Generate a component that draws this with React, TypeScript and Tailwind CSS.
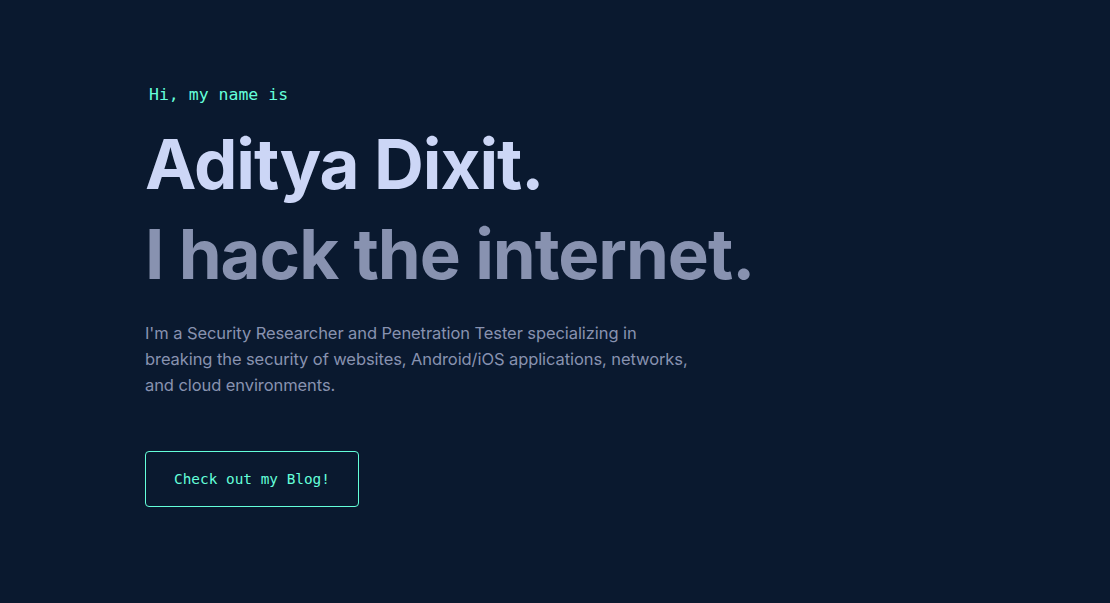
export default function App() {
  return (
    <div className="min-h-[603px] w-full bg-[#0a192f] pl-[145px] pt-[85px]">
      <p className="ml-[4px] font-['DejaVu_Sans_Mono',monospace] text-[16.5px] leading-[20px] text-[#64ffda]">
        Hi, my name is
      </p>
      <h1 className="mt-[19px] font-['Inter',sans-serif] text-[69px] font-bold leading-[80px] tracking-[-0.015em] text-[#ccd6f6]">
        Aditya Dixit.
      </h1>
      <h2 className="mt-[5px] font-['Inter',sans-serif] text-[69px] font-bold leading-[90px] tracking-[-0.015em] text-[#8892b0]">
        I hack the internet.
      </h2>
      <p className="mt-[21px] font-['Inter',sans-serif] text-[16.5px] leading-[26px] tracking-[-0.005em] text-[#8892b0]">
        I'm a Security Researcher and Penetration Tester specializing in
        <br />
        breaking the security of websites, Android/iOS applications, networks,
        <br />
        and cloud environments.
      </p>
      <a className="mt-[53px] inline-block rounded-[4px] border border-[#64ffda] px-[28px] py-[19px] font-['DejaVu_Sans_Mono',monospace] text-[14.4px] leading-[16px] text-[#64ffda]">
        Check out my Blog!
      </a>
    </div>
  );
}
